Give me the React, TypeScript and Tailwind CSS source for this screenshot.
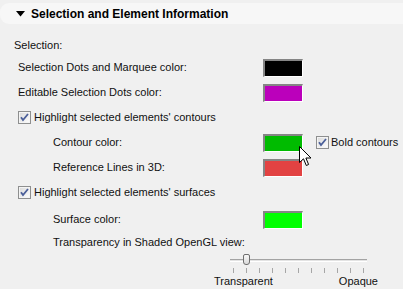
import React from "react";

const font = { fontFamily: '"Liberation Sans", Arial, sans-serif' };

function Swatch({ color }: { color: string }) {
  return (
    <div className="w-[40px] h-[18px] border-t-2 border-l-2 border-r border-b border-t-[#858585] border-l-[#858585] border-r-white border-b-white">
      <div className="w-full h-full" style={{ backgroundColor: color }} />
    </div>
  );
}

function Check() {
  return (
    <svg width="13" height="13" viewBox="0 0 13 13" className="shrink-0">
      <defs>
        <linearGradient id="cbg" x1="0" y1="0" x2="1" y2="1">
          <stop offset="0" stopColor="#dcdcdc" />
          <stop offset="1" stopColor="#fbfbfb" />
        </linearGradient>
      </defs>
      <rect x="0.5" y="0.5" width="12" height="12" fill="#f4f4f4" stroke="#8e8f8f" />
      <rect x="2" y="2" width="9" height="9" fill="url(#cbg)" />
      <path d="M3 6.2 L5 9 L10 3" fill="none" stroke="#4b5f99" strokeWidth="1.8" />
    </svg>
  );
}

function Row({ label, color, indent = "pl-[18px]" }: { label: string; color: string; indent?: string }) {
  return (
    <div className={`h-[25px] flex items-center ${indent}`}>
      <span className="flex-1 whitespace-nowrap">{label}</span>
      <div className="mr-[100px] flex items-center">
        <Swatch color={color} />
      </div>
    </div>
  );
}

export default function App() {
  const ticks = Array.from({ length: 11 });
  return (
    <div className="relative w-[403px] h-[289px] bg-[#f0f0f0] text-[11px] text-[#111] overflow-hidden" style={font}>
      <div className="mt-[3px] h-[21px] bg-[#f7f7f7] rounded-l-[9px] flex items-center pl-[16px] gap-[6px]">
        <svg width="9" height="6" viewBox="0 0 9 6">
          <path d="M0 0 H9 L4.5 5.5 Z" fill="#000" />
        </svg>
        <span className="font-bold text-[12px] text-black">Selection and Element Information</span>
      </div>

      <div className="mt-[13px] h-[16px] flex items-center pl-[14px]">Selection:</div>

      <div className="mt-[2px]">
        <Row label="Selection Dots and Marquee color:" color="#000000" />
        <Row label="Editable Selection Dots color:" color="#bb00bb" />
        <div className="h-[25px] flex items-center pl-[18px] gap-[3px]">
          <Check />
          <span>Highlight selected elements' contours</span>
        </div>
        <div className="h-[25px] flex items-center pl-[53px]">
          <span className="flex-1">Contour color:</span>
          <Swatch color="#00bb00" />
          <div className="w-[100px] flex items-center pl-[13px] gap-[2px] whitespace-nowrap">
            <Check />
            <span>Bold contours</span>
          </div>
        </div>
        <Row label="Reference Lines in 3D:" color="#e24242" indent="pl-[53px]" />
        <div className="h-[25px] flex items-center pl-[18px] gap-[3px]">
          <Check />
          <span>Highlight selected elements' surfaces</span>
        </div>
        <div className="mt-[2px]">
          <Row label="Surface color:" color="#00ff00" indent="pl-[53px]" />
        </div>
      </div>

      <div className="h-[20px] flex items-center pl-[53px]">Transparency in Shaded OpenGL view:</div>

      <div className="ml-[230px] w-[137px] pt-[2px]">
        <div className="relative h-[12px] flex items-center">
          <div className="w-full h-[3px] border-t border-t-[#a3a3a3] bg-[#e3e3e3] border-b border-b-white" />
          <div className="absolute left-[13px] top-0 w-[7px] h-[11px] rounded-[2px] rounded-b-[3px] border border-[#6f6f6f] bg-gradient-to-b from-[#f8f8f8] to-[#dadada]" />
        </div>
        <div className="mt-[2px] h-[5px] flex justify-between px-[3px]">
          {ticks.map((_, i) => (
            <div key={i} className="w-px h-full bg-[#a6a6a6]" />
          ))}
        </div>
      </div>

      <div className="mt-[1px] h-[15px] flex items-center">
        <span className="ml-[214px]">Transparent</span>
        <span className="ml-auto mr-[25px]">Opaque</span>
      </div>

      <svg className="absolute left-[299px] top-[146px]" width="13" height="21" viewBox="0 0 13 21">
        <path
          d="M0.5 0.5 V16.5 L4.5 12.8 L7.3 19.5 L9.6 18.5 L6.9 12 H12 Z"
          fill="#fff"
          stroke="#000"
          strokeWidth="1"
          strokeLinejoin="miter"
        />
      </svg>
    </div>
  );
}
